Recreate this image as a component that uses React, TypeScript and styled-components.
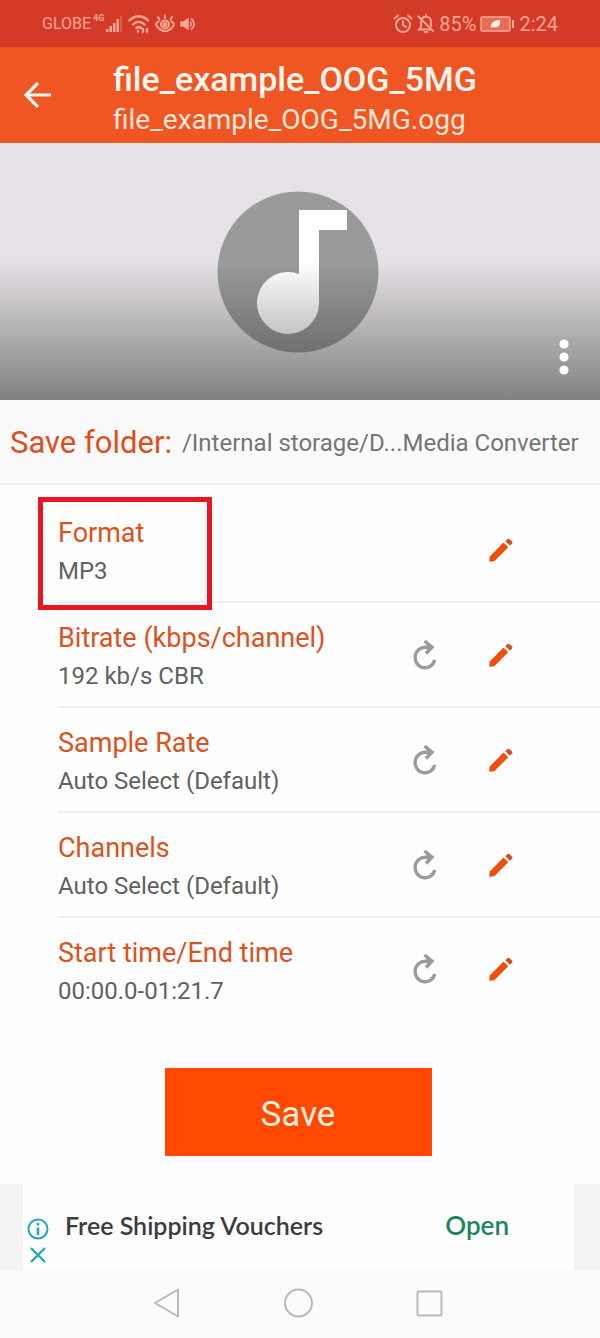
import React from "react";
import styled, { createGlobalStyle } from "styled-components";

const GlobalStyle = createGlobalStyle`
  * { box-sizing: border-box; }
  body {
    margin: 0;
    background: #fefefe;
    font-family: Roboto, "Noto Sans", sans-serif;
  }
  button {
    font-family: inherit;
    border: 0;
    padding: 0;
    background: none;
    cursor: pointer;
  }
  svg { display: block; }
`;

const Screen = styled.div`
  display: flex;
  flex-direction: column;
  width: 100%;
  min-height: 100vh;
`;

const StatusBar = styled.div`
  display: flex;
  align-items: center;
  justify-content: space-between;
  height: 47px;
  padding: 0 42px;
  background: #d33a28;
  color: #f7a592;
`;

const StatusGroup = styled.div<{ $gap: number }>`
  display: flex;
  align-items: center;
  gap: ${(p) => p.$gap}px;
`;

const StatusText = styled.span<{ $size: number }>`
  font-size: ${(p) => p.$size}px;
  line-height: 24px;
`;

const Network = styled.span`
  align-self: flex-start;
  font-size: 9px;
  font-weight: 700;
  line-height: 12px;
`;

const Header = styled.header`
  display: flex;
  align-items: center;
  height: 96px;
  padding-left: 20px;
  background: #f05623;
  color: #fff6ee;
`;

const BackButton = styled.button`
  width: 36px;
  margin-right: 57px;
  color: inherit;
`;

const Heading = styled.div`
  padding-top: 6px;
`;

const Title = styled.h1`
  margin: 0;
  font-size: 34px;
  font-weight: 500;
  line-height: 44px;
`;

const Subtitle = styled.p`
  margin: 0;
  font-size: 28px;
  line-height: 38px;
  color: #ffe6d6;
`;

const Artwork = styled.section`
  position: relative;
  display: flex;
  justify-content: center;
  height: 257px;
  padding: 48px 4px 0 0;
  background: #e5e1e6;

  &::after {
    content: "";
    position: absolute;
    inset: 0;
    background: linear-gradient(rgba(0, 0, 0, 0) 46%, rgba(20, 20, 18, 0.48));
  }
`;

const MoreButton = styled.button`
  position: absolute;
  z-index: 1;
  right: 24px;
  bottom: 22px;
`;

const SaveFolder = styled.section`
  display: flex;
  align-items: center;
  gap: 10px;
  height: 85px;
  padding: 2px 10px 0;
  background: #fafafa;
  border-bottom: 2px solid #eeeeee;
  white-space: nowrap;
`;

const FolderLabel = styled.span`
  font-size: 31px;
  line-height: 40px;
  color: #e04e1b;
`;

const FolderPath = styled.span`
  font-size: 24px;
  line-height: 40px;
  color: #757575;
`;

const Settings = styled.ul`
  list-style: none;
  margin: 0;
  padding: 13px 0 0 58px;
`;

const Setting = styled.li`
  position: relative;
  display: flex;
  align-items: center;
  height: 105px;
  padding-right: 86px;
  border-bottom: 2px solid #efefef;

  &:last-child {
    border-bottom: 0;
    height: 102px;
  }
`;

const SettingText = styled.div`
  flex: 1;
  padding-top: 5px;
`;

const SettingName = styled.h2`
  margin: 0;
  font-size: 27px;
  font-weight: 400;
  line-height: 38px;
  color: #dd5220;
`;

const SettingValue = styled.p`
  margin: 0;
  font-size: 24px;
  line-height: 38px;
  color: #616161;
`;

const Actions = styled.div`
  display: flex;
  align-items: center;
  gap: 48px;
`;

const Highlight = styled.span`
  position: absolute;
  left: -20px;
  top: -1px;
  width: 174px;
  height: 113px;
  border: 5px solid #ec1620;
  z-index: 1;
  pointer-events: none;
`;

const SaveRow = styled.div`
  display: flex;
  justify-content: center;
  padding: 48px 4px 28px 0;
`;

const SaveButton = styled.button`
  width: 267px;
  height: 88px;
  padding-top: 4px;
  background: #ff4800;
  color: #ffeedd;
  font-size: 35px;
`;

const AdStrip = styled.aside`
  padding: 0 26px 0 23px;
  background: #f3f3f3;
`;

const Ad = styled.div`
  display: flex;
  align-items: center;
  height: 86px;
  padding: 0 65px 4px 4px;
  background: #fefefe;
  font-family: Lato, sans-serif;
`;

const AdControls = styled.div`
  display: flex;
  flex-direction: column;
  align-items: center;
  gap: 6px;
  margin: 32px 16px 0 0;
`;

const AdTitle = styled.span`
  flex: 1;
  font-size: 25px;
  font-weight: 600;
  color: #3c3c40;
`;

const AdLink = styled.a`
  font-size: 26px;
  font-weight: 600;
  color: #1b8560;
  text-decoration: none;
`;

const NavBar = styled.nav`
  display: flex;
  flex: 1;
  align-items: center;
  justify-content: center;
  gap: 102px;
  min-height: 68px;
  padding: 0 4px 2px 0;
  background: #fbfbfb;
`;

const SignalIcon = () => (
  <svg width="18" height="18" fill="currentColor" aria-hidden="true">
    <rect x="0" y="14" width="2.500" height="3" />
    <rect x="3.500" y="11" width="2.500" height="6" />
    <rect x="7" y="8" width="2.500" height="9" />
    <rect x="10.500" y="4" width="2.500" height="13" />
    <rect x="14" y="1" width="2" height="16" opacity="0.35" />
  </svg>
);

const WifiIcon = () => (
  <svg width="22" height="20" fill="none" stroke="currentColor" strokeWidth="2.400" strokeLinecap="round" aria-hidden="true">
    <path d="M1.5 6.5C7 .8 14.500 .8 20 6.500M5 10.500C8.500 7 13 7 16.500 10.500M8.500 14c1.500-1.300 3-1.300 4.500 0" />
    <path d="M10 17v.5M15 15v3M19 15v3" />
  </svg>
);

const EyeIcon = () => (
  <svg width="22" height="19" fill="none" stroke="currentColor" strokeWidth="2" strokeLinecap="round" aria-hidden="true">
    <path d="M4.500 7.500Q1 10 2.500 11.500C7 19 15 19 19.500 11.500Q21 10 17.500 7.500" />
    <circle cx="11" cy="10.500" r="4" />
    <circle cx="11" cy="10.500" r="1.500" fill="currentColor" />
    <path d="M11 4V1.500M5.500 5.500 4 3M16.500 5.500 18 3" />
  </svg>
);

const SoundIcon = () => (
  <svg width="16" height="16" fill="none" stroke="currentColor" strokeWidth="1.600" aria-hidden="true">
    <path d="M1 6h3l4-3v10l-4-3H1z" fill="currentColor" />
    <path d="M10 5.500c1.600 1.500 1.600 3.500 0 5M11 2.500c4 3 4 8 0 11" />
  </svg>
);

const AlarmIcon = () => (
  <svg width="20" height="20" fill="none" stroke="currentColor" strokeWidth="2" strokeLinecap="round" aria-hidden="true">
    <circle cx="10" cy="11" r="7" />
    <path d="M10 7v4l3 2M1.500 4.500 5 1.500M18.500 4.500 15 1.500" />
  </svg>
);

const MutedBellIcon = () => (
  <svg width="18" height="20" fill="none" stroke="currentColor" strokeWidth="2" strokeLinecap="round" aria-hidden="true">
    <path d="M1.500 2.500 16 17M5.500 4C6.500 3 7.600 2.800 9 2.800 12.500 3 14 5.500 14 8v4M4 7.500V13l-2 2.500h11M9 1v1.500M7.500 18h3" />
  </svg>
);

const BatteryIcon = () => (
  <svg width="35" height="16" aria-hidden="true">
    <rect x="1" y="1" width="29" height="14" rx="1" fill="#e56d58" stroke="currentColor" strokeWidth="1.500" />
    <rect x="32" y="4" width="2" height="8" fill="currentColor" />
    <path d="M11 12C10 7 14 4 20 4c1 5-2 9-7 7z" fill="#ffe8dc" />
  </svg>
);

const ArrowBackIcon = () => (
  <svg width="36" height="32" fill="none" stroke="currentColor" strokeWidth="3.200" aria-hidden="true">
    <path d="M31 16H6M18 4 6 16l12 12" />
  </svg>
);

const NoteIcon = () => (
  <svg width="162" height="162" role="img" aria-label="Audio file">
    <circle cx="81" cy="81" r="80.500" fill="#999b9a" />
    <path d="M82 19h48v20h-28v73a31 31 0 1 1-20-29z" fill="#fff" />
  </svg>
);

const MoreIcon = () => (
  <svg width="24" height="42" fill="#fff" aria-hidden="true">
    <circle cx="12" cy="8" r="4.600" />
    <circle cx="12" cy="21" r="4.600" />
    <circle cx="12" cy="34" r="4.600" />
  </svg>
);

const ResetIcon = () => (
  <svg width="28" height="32" fill="none" stroke="#9b9b9b" strokeWidth="3.400" aria-hidden="true">
    <path d="M19 8.200H13.500A10 10.300 0 1 0 22.800 21" />
    <path d="M12.500 2 20 8.200 14 14.500" />
    <path d="M15 5 19.500 8.200 16 12z" fill="#9b9b9b" strokeWidth="1" />
  </svg>
);

const PencilIcon = () => (
  <svg width="26" height="26" aria-hidden="true">
    <path d="M2 24 2.300 20 15.500 6.500 19.300 10.300 6 23.500z" fill="#f04e0c" strokeLinejoin="round" stroke="#f04e0c" strokeWidth="1.400" />
    <path d="M17.300 4.300 19.300 2.300Q20.500 1.300 21.700 2.300L24 4.600Q25 5.600 24 6.600L22 8.700z" fill="#d9501d" />
  </svg>
);

const InfoIcon = () => (
  <svg width="22" height="22" fill="none" stroke="#26a5bf" strokeWidth="2" aria-hidden="true">
    <circle cx="11" cy="11" r="9.500" />
    <path d="M11 9.500V17M11 5v2.500" strokeWidth="2.500" />
  </svg>
);

const CloseIcon = () => (
  <svg width="18" height="18" stroke="#26a5bf" strokeWidth="2.400" aria-hidden="true">
    <path d="M2 2 16 16M16 2 2 16" />
  </svg>
);

const NavBackIcon = () => (
  <svg width="30" height="34" fill="none" stroke="#b9b9b9" strokeWidth="2" strokeLinejoin="round" aria-hidden="true">
    <path d="M26 3.500v27L3 17z" />
  </svg>
);

const NavHomeIcon = () => (
  <svg width="30" height="34" fill="none" stroke="#b9b9b9" strokeWidth="2" aria-hidden="true">
    <circle cx="14.500" cy="17" r="13.500" />
  </svg>
);

const NavRecentIcon = () => (
  <svg width="28" height="34" fill="none" stroke="#b9b9b9" strokeWidth="2" aria-hidden="true">
    <rect x="1.500" y="5.500" width="24" height="24" rx="1" />
  </svg>
);

const settings = [
  { name: "Format", value: "MP3", resettable: false, highlighted: true },
  { name: "Bitrate (kbps/channel)", value: "192 kb/s CBR", resettable: true },
  { name: "Sample Rate", value: "Auto Select (Default)", resettable: true },
  { name: "Channels", value: "Auto Select (Default)", resettable: true },
  { name: "Start time/End time", value: "00:00.0-01:21.7", resettable: true },
];

export default function App() {
  return (
    <Screen>
      <GlobalStyle />
      <StatusBar>
        <StatusGroup $gap={4}>
          <StatusGroup $gap={2}>
            <StatusText $size={16}>GLOBE</StatusText>
            <Network>4G</Network>
            <SignalIcon />
          </StatusGroup>
          <WifiIcon />
          <EyeIcon />
          <SoundIcon />
        </StatusGroup>
        <StatusGroup $gap={4}>
          <AlarmIcon />
          <MutedBellIcon />
          <StatusText $size={20}>85%</StatusText>
          <BatteryIcon />
          <StatusText $size={20}>2:24</StatusText>
        </StatusGroup>
      </StatusBar>

      <Header>
        <BackButton aria-label="Back">
          <ArrowBackIcon />
        </BackButton>
        <Heading>
          <Title>file_example_OOG_5MG</Title>
          <Subtitle>file_example_OOG_5MG.ogg</Subtitle>
        </Heading>
      </Header>

      <Artwork>
        <NoteIcon />
        <MoreButton aria-label="More options">
          <MoreIcon />
        </MoreButton>
      </Artwork>

      <SaveFolder>
        <FolderLabel>Save folder:</FolderLabel>
        <FolderPath>/Internal storage/D...Media Converter</FolderPath>
      </SaveFolder>

      <Settings>
        {settings.map((s) => (
          <Setting key={s.name}>
            {s.highlighted && <Highlight />}
            <SettingText>
              <SettingName>{s.name}</SettingName>
              <SettingValue>{s.value}</SettingValue>
            </SettingText>
            <Actions>
              {s.resettable && (
                <button aria-label={`Reset ${s.name}`}>
                  <ResetIcon />
                </button>
              )}
              <button aria-label={`Edit ${s.name}`}>
                <PencilIcon />
              </button>
            </Actions>
          </Setting>
        ))}
      </Settings>

      <SaveRow>
        <SaveButton>Save</SaveButton>
      </SaveRow>

      <AdStrip>
        <Ad>
          <AdControls>
            <button aria-label="Ad information">
              <InfoIcon />
            </button>
            <button aria-label="Close ad">
              <CloseIcon />
            </button>
          </AdControls>
          <AdTitle>Free Shipping Vouchers</AdTitle>
          <AdLink href="#open">Open</AdLink>
        </Ad>
      </AdStrip>

      <NavBar>
        <button aria-label="Back">
          <NavBackIcon />
        </button>
        <button aria-label="Home">
          <NavHomeIcon />
        </button>
        <button aria-label="Recent apps">
          <NavRecentIcon />
        </button>
      </NavBar>
    </Screen>
  );
}
